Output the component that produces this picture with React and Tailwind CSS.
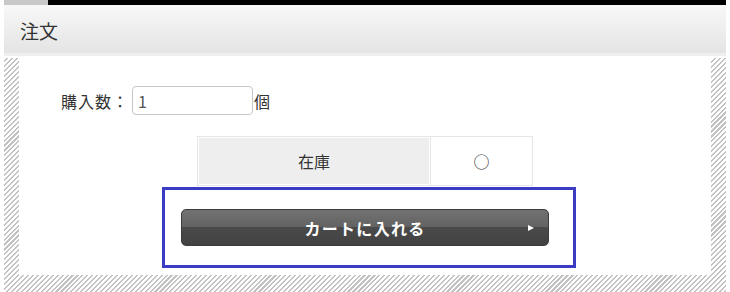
import React from 'react';

const font = { fontFamily: "Meiryo, 'Noto Sans CJK JP', sans-serif" };

const hatch =
  'bg-[image:repeating-linear-gradient(135deg,#ffffff_0px,#ffffff_2px,#c2c2c2_2px,#c2c2c2_3.5px)]';

export default function App() {
  return (
    <div className="w-[730px] h-[292px] bg-white overflow-hidden" style={font}>
      <div className="ml-[4px] w-[722px]">
        {/* top strip */}
        <div className="flex h-[5px]">
          <div className="w-[44px] bg-[#c8c8c8]" />
          <div className="flex-1 bg-black" />
        </div>

        {/* heading */}
        <div className="h-[51px] flex items-center pl-[16px] pt-[4px] bg-gradient-to-b from-[#f8f8f8] to-[#e4e4e4] border-b-[3px] border-[#efefef]">
          <span className="text-[19px] text-[#333]">注文</span>
        </div>
        <div className="h-[2px] bg-white" />

        {/* hatched panel */}
        <div className={`${hatch} px-[15px] pb-[17px]`}>
          <div className="bg-white h-[217px] pt-[28px]">
            <div className="flex items-center pl-[42px] text-[16px] text-[#333]">
              <span className="tracking-[1px]">購入数：</span>
              <div className="ml-[3px] w-[121px] h-[29px] rounded-[4px] border border-[#c6c6c6] flex items-center pl-[5px] text-[#555]">
                1
              </div>
              <span className="ml-[1px]">個</span>
            </div>

            <div className="mt-[21px] flex justify-center">
              <div className="flex gap-[1px] p-[1px] bg-[#e6e6e6] w-[336px] h-[50px]">
                <div className="w-[232px] bg-[#eeeeee] border border-white flex items-center justify-center text-[16px] text-[#333]">
                  在庫
                </div>
                <div className="flex-1 bg-white flex items-center justify-center text-[16px] text-[#333]">
                  ○
                </div>
              </div>
            </div>

            <div className="mt-[1px] ml-[143px] w-[414px] h-[81px] border-[3px] border-[#3b3bc4] pt-[19px] pl-[16px]">
              <button className="relative w-[368px] h-[37px] rounded-[5px] border border-[#3c3c3c] bg-[linear-gradient(to_bottom,#727272_0%,#626262_50%,#4a4a4a_50%,#424242_100%)] flex items-center justify-center text-white text-[16px] font-bold tracking-[1.3px]">
                カートに入れる
                <span className="absolute right-[14px] top-1/2 -translate-y-1/2 w-0 h-0 border-y-[3.5px] border-y-transparent border-l-[6px] border-l-white" />
              </button>
            </div>
          </div>
        </div>
      </div>
    </div>
  );
}
